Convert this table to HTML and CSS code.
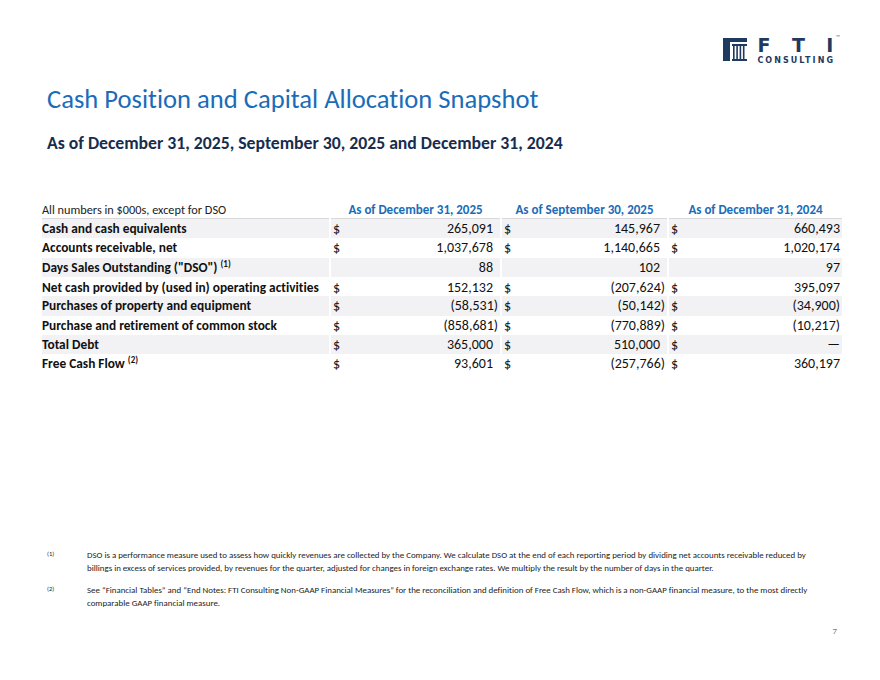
FILE: index.html
```html
<!DOCTYPE html>
<html>
<head>
<meta charset="utf-8">
<link rel="stylesheet" href="styles.css">
</head>
<body>
<div class="page">
  <header class="top">
    <div class="logo">
      <svg class="logo-mark" width="24" height="23" viewBox="0 0 24 23">
        <rect x="0" y="0" width="24" height="4" fill="#1f3a5f"/>
        <rect x="0" y="0" width="7" height="23" fill="#1f3a5f"/>
        <rect x="9" y="6" width="15" height="2" fill="#1f3a5f"/>
        <rect x="10" y="8" width="1.6" height="13" fill="#1f3a5f"/>
        <rect x="13.3" y="8" width="1.6" height="13" fill="#1f3a5f"/>
        <rect x="16.6" y="8" width="1.6" height="13" fill="#1f3a5f"/>
        <rect x="19.9" y="8" width="1.6" height="13" fill="#1f3a5f"/>
        <rect x="9" y="21" width="15" height="2" fill="#1f3a5f"/>
      </svg>
      <div class="logo-text">
        <div class="logo-fti"><span>F</span><span>T</span><span>I</span><sup class="tm">™</sup></div>
        <div class="logo-sub">CONSULTING</div>
      </div>
    </div>
  </header>

  <h1 class="title">Cash Position and Capital Allocation Snapshot</h1>
  <h2 class="subtitle">As of December 31, 2025, September 30, 2025 and December 31, 2024</h2>

  <table class="data">
    <colgroup>
      <col class="c-label"><col class="c-v1"><col class="c-v2"><col class="c-v3">
    </colgroup>
    <thead>
      <tr>
        <th class="note-head">All numbers in $000s, except for DSO</th>
        <th class="col-head">As of December 31, 2025</th>
        <th class="col-head">As of September 30, 2025</th>
        <th class="col-head">As of December 31, 2024</th>
      </tr>
    </thead>
    <tbody>
      <tr class="alt">
        <td class="lbl">Cash and cash equivalents</td>
        <td><span class="cur">$</span><span class="num">265,091</span></td>
        <td><span class="cur">$</span><span class="num">145,967</span></td>
        <td><span class="cur">$</span><span class="num">660,493</span></td>
      </tr>
      <tr>
        <td class="lbl">Accounts receivable, net</td>
        <td><span class="cur">$</span><span class="num">1,037,678</span></td>
        <td><span class="cur">$</span><span class="num">1,140,665</span></td>
        <td><span class="cur">$</span><span class="num">1,020,174</span></td>
      </tr>
      <tr class="alt">
        <td class="lbl">Days Sales Outstanding ("DSO") <sup>(1)</sup></td>
        <td><span class="cur"></span><span class="num">88</span></td>
        <td><span class="cur"></span><span class="num">102</span></td>
        <td><span class="cur"></span><span class="num">97</span></td>
      </tr>
      <tr class="tall">
        <td class="lbl">Net cash provided by (used in) operating activities</td>
        <td><span class="cur">$</span><span class="num">152,132</span></td>
        <td><span class="cur">$</span><span class="num neg">(207,624)</span></td>
        <td><span class="cur">$</span><span class="num">395,097</span></td>
      </tr>
      <tr class="alt">
        <td class="lbl">Purchases of property and equipment</td>
        <td><span class="cur">$</span><span class="num neg">(58,531)</span></td>
        <td><span class="cur">$</span><span class="num neg">(50,142)</span></td>
        <td><span class="cur">$</span><span class="num neg">(34,900)</span></td>
      </tr>
      <tr>
        <td class="lbl">Purchase and retirement of common stock</td>
        <td><span class="cur">$</span><span class="num neg">(858,681)</span></td>
        <td><span class="cur">$</span><span class="num neg">(770,889)</span></td>
        <td><span class="cur">$</span><span class="num neg">(10,217)</span></td>
      </tr>
      <tr class="alt">
        <td class="lbl">Total Debt</td>
        <td><span class="cur">$</span><span class="num">365,000</span></td>
        <td><span class="cur">$</span><span class="num">510,000</span></td>
        <td><span class="cur">$</span><span class="num">—</span></td>
      </tr>
      <tr>
        <td class="lbl">Free Cash Flow <sup>(2)</sup></td>
        <td><span class="cur">$</span><span class="num">93,601</span></td>
        <td><span class="cur">$</span><span class="num neg">(257,766)</span></td>
        <td><span class="cur">$</span><span class="num">360,197</span></td>
      </tr>
    </tbody>
  </table>

  <div class="notes">
    <div class="note">
      <span class="mark">(1)</span>
      <p>DSO is a performance measure used to assess how quickly revenues are collected by the Company. We calculate DSO at the end of each reporting period by dividing net accounts receivable reduced by billings in excess of services provided, by revenues for the quarter, adjusted for changes in foreign exchange rates. We multiply the result by the number of days in the quarter.</p>
    </div>
    <div class="note">
      <span class="mark">(2)</span>
      <p>See “Financial Tables” and “End Notes: FTI Consulting Non-GAAP Financial Measures” for the reconciliation and definition of Free Cash Flow, which is a non-GAAP financial measure, to the most directly comparable GAAP financial measure.</p>
    </div>
  </div>

  <footer class="foot"><span class="pageno">7</span></footer>
</div>
</body>
</html>
```

FILE: styles.css
```css
* { box-sizing: border-box; }
html, body { margin: 0; padding: 0; background: #fff; }
body {
  font-family: Carlito, Calibri, Lato, "Open Sans", sans-serif;
  font-variant-ligatures: none;
  color: #111;
  width: 880px;
  height: 680px;
  overflow: hidden;
}
.page {
  display: flex;
  flex-direction: column;
  height: 680px;
  padding: 0 40px 0 42px;
}
.top {
  display: flex;
  justify-content: flex-end;
  padding-top: 37px;
  margin-right: 5px;
}
.logo {
  display: flex;
  align-items: flex-start;
  gap: 10px;
}
.logo-mark { display: block; margin-top: 1px; }
.logo-text { display: flex; flex-direction: column; }
.logo-fti {
  display: flex;
  font-family: "DejaVu Sans", sans-serif;
  font-weight: bold;
  font-size: 19px;
  line-height: 16px;
  color: #1f3a5f;
  position: relative;
  width: 76px;
  justify-content: space-between;
}
.logo-fti .tm {
  position: absolute;
  right: -7px;
  top: -2px;
  font-size: 5px;
  line-height: 5px;
  font-weight: normal;
}
.logo-sub {
  font-family: "DejaVu Sans", sans-serif;
  font-size: 8px;
  letter-spacing: 2.05px;
  color: #1f3a5f;
  margin-top: 3px;
  font-weight: bold;
}
.title {
  margin: 17px 0 0 5px;
  font-weight: normal;
  font-size: 26.6px;
  line-height: 34px;
  color: #1b6cb8;
}
.subtitle {
  margin: 16px 0 0 5px;
  font-weight: bold;
  font-size: 17.7px;
  line-height: 22px;
  color: #182d4e;
}
.data {
  margin-top: 47px;
  border-collapse: separate;
  border-spacing: 2px 0;
  margin-left: -2px;
  width: 802px;
  table-layout: fixed;
}
.c-label { width: 287px; }
.c-v1 { width: 169px; }
.c-v2 { width: 165px; }
.c-v3 { width: 173px; }
.data th {
  line-height: 17px;
  padding: 0;
  border-bottom: 1px solid #d9d9dc;
  white-space: nowrap;
}
.note-head { text-align: left; font-weight: normal; color: #222; font-size: 12.3px; }
.col-head { text-align: center; font-weight: bold; color: #1b6cb8; font-size: 13px; }
.data td {
  font-size: 14px;
  line-height: 19.3px;
  padding: 0;
  white-space: nowrap;
}
.data tr.tall td { line-height: 17px; padding-top: 2.5px; }
.data tr.alt td { background: #f2f2f4; }
.data td.lbl { font-weight: bold; font-size: 13.35px; }
.data td.lbl sup { font-size: 9px; vertical-align: 5px; line-height: 0; }
.data td:not(.lbl) { padding-right: 7px; padding-left: 2px; }
.data td:last-child { padding-right: 2px; }
.cur { float: left; }
.num { float: right; }
.num.neg { margin-right: -5px; }
.data td:last-child .num.neg { margin-right: 0; }
.notes { margin-top: auto; }
.note {
  display: flex;
  font-size: 8.9px;
  line-height: 13px;
  color: #222;
  margin-bottom: 9px;
}
.mark { width: 45px; flex: none; font-size: 6.5px; padding-left: 5px; line-height: 11px; }
.note p { margin: 0; width: 735px; }
.foot {
  display: flex;
  justify-content: flex-end;
  padding: 6px 3px 44px 0;
}
.pageno { font-size: 9px; color: #777; }
```
